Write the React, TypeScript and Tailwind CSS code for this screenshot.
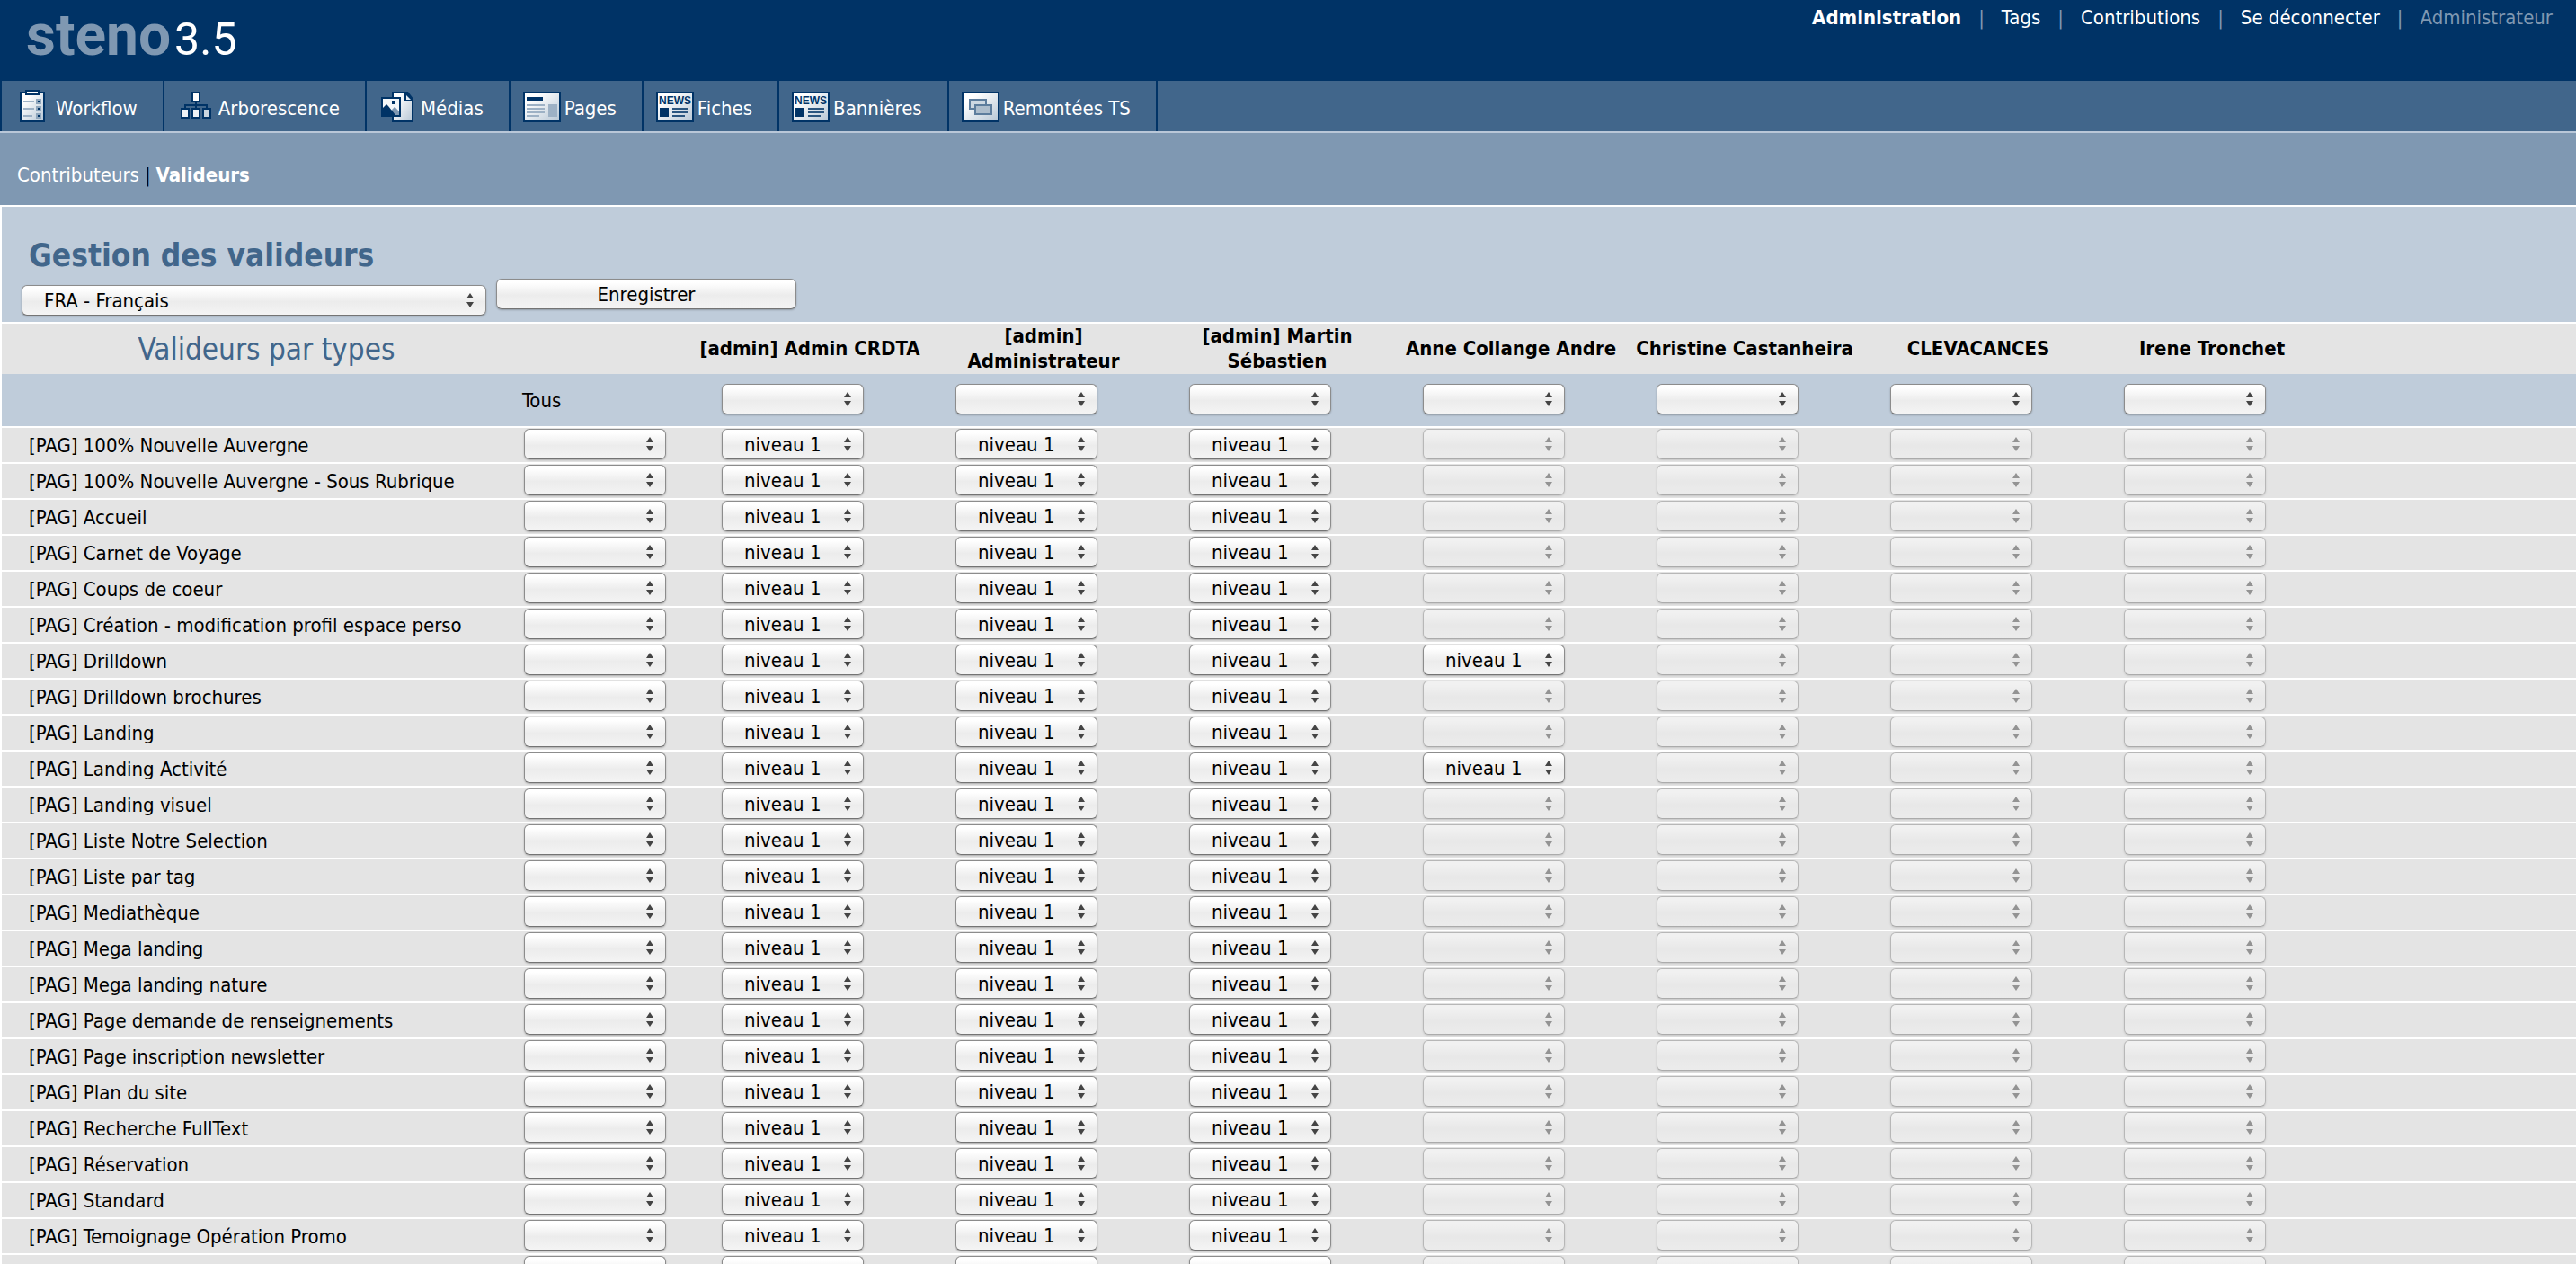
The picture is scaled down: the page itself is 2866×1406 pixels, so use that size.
import type { ReactNode } from 'react';

const NAVY = '#003366';

const PEOPLE = [
  '[admin] Admin CRDTA',
  '[admin] Administrateur',
  '[admin] Martin Sébastien',
  'Anne Collange Andre',
  'Christine Castanheira',
  'CLEVACANCES',
  'Irene Tronchet',
];

const TYPES = [
  '100% Nouvelle Auvergne',
  '100% Nouvelle Auvergne - Sous Rubrique',
  'Accueil',
  'Carnet de Voyage',
  'Coups de coeur',
  'Création - modification profil espace perso',
  'Drilldown',
  'Drilldown brochures',
  'Landing',
  'Landing Activité',
  'Landing visuel',
  'Liste Notre Selection',
  'Liste par tag',
  'Mediathèque',
  'Mega landing',
  'Mega landing nature',
  'Page demande de renseignements',
  'Page inscription newsletter',
  'Plan du site',
  'Recherche FullText',
  'Réservation',
  'Standard',
  'Temoignage Opération Promo',
  '',
];

// Types for which the fourth person also validates at level 1.
const FOURTH_PERSON_TYPES = ['Drilldown', 'Landing Activité'];

function isActive(type: string, person: number) {
  return person < 3 || (person === 3 && FOURTH_PERSON_TYPES.includes(type));
}

function NavIcon({ children }: { children: ReactNode }) {
  return (
    <svg viewBox="0 0 21 18" className="h-9 w-[42px] shrink-0" aria-hidden="true">
      <defs>
        <linearGradient id="paper" x1="0" y1="0" x2="1" y2="1">
          <stop offset="0.2" stopColor="#ffffff" />
          <stop offset="1" stopColor="#b9c8d6" />
        </linearGradient>
      </defs>
      {children}
    </svg>
  );
}

const PAPER = 'url(#paper)';

function WorkflowIcon() {
  return (
    <NavIcon>
      <rect x="3" y="1" width="14" height="17" fill={NAVY} />
      <rect x="4" y="2" width="12" height="15" fill={PAPER} />
      <rect x="6" y="0" width="8" height="3" fill={NAVY} />
      <rect x="7" y="1" width="6" height="1" fill="#fff" />
      {[5, 9, 13].map((y) => (
        <g key={y}>
          <rect x="5" y={y + 1} width={y === 13 ? 5 : 6} height="1" fill="#9db1c5" />
          <rect x="12" y={y} width="3" height="3" fill="#8fa6bc" />
          <rect x="13" y={y + 1} width="1" height="1" fill={NAVY} />
        </g>
      ))}
    </NavIcon>
  );
}

function TreeIcon() {
  return (
    <NavIcon>
      <path d="M8 1h5v6h-2v1h6v2h-1v-1h-5v1h-1v-1h-5v1h-1v-2h6v-1h-2z" fill={NAVY} />
      <rect x="9" y="2" width="3" height="4" fill="#fff" />
      {[2, 8, 14].map((x) => (
        <g key={x}>
          <rect x={x} y="10" width="5" height="6" fill={NAVY} />
          <rect x={x + 1} y="11" width="3" height="4" fill={x === 14 ? '#c9d5e0' : '#eef2f6'} />
        </g>
      ))}
    </NavIcon>
  );
}

function MediaIcon() {
  return (
    <NavIcon>
      <path d="M7 1h9l3 4v13H7z" fill={NAVY} />
      <path d="M8 2h6v4h4v11H8z" fill={PAPER} />
      <path d="M15 3l2.5 2.5H15z" fill="#e6ecf2" />
      <rect x="1" y="4" width="11" height="11" fill={NAVY} />
      <rect x="2" y="5" width="9" height="9" fill="#f4f7f9" />
      <path d="M6 12l2.6-2.6L11 12v2H6z" fill="#7f98b2" />
      <path d="M2 10l2-2 1 1 4 5H2z" fill={NAVY} />
      <rect x="7" y="6" width="2" height="2" fill={NAVY} />
    </NavIcon>
  );
}

function PageFrame() {
  return (
    <>
      <rect x="0" y="1" width="21" height="17" fill={NAVY} />
      <rect x="1" y="2" width="19" height="15" fill={PAPER} />
    </>
  );
}

function PagesIcon() {
  return (
    <NavIcon>
      <PageFrame />
      <rect x="2" y="4" width="9" height="2" fill={NAVY} />
      <path d="M2 8h10v1H2zM2 10h10v1H2zM2 12h10v1H2zM2 14h7v1H2z" fill="#9db1c5" />
      <rect x="14" y="8" width="5" height="7" fill="#9db1c5" />
    </NavIcon>
  );
}

function NewsIcon() {
  return (
    <NavIcon>
      <PageFrame />
      <text x="10.5" y="8" textAnchor="middle" fill={NAVY} className="font-['Liberation_Sans',sans-serif] text-[6px] font-bold">
        NEWS
      </text>
      <rect x="2" y="10" width="5" height="5" fill={NAVY} />
      <path d="M9 10h9v1H9zM9 12h9v1H9zM9 14h7v1H9z" fill="#2a557f" />
    </NavIcon>
  );
}

function LayersIcon() {
  return (
    <NavIcon>
      <PageFrame />
      <rect x="4.5" y="5.5" width="9" height="5" fill="#cdd8e2" stroke="#5d7d9d" />
      <rect x="7.5" y="8.5" width="9" height="5" fill="#adbdcc" stroke="#5d7d9d" />
    </NavIcon>
  );
}

const NAV = [
  { label: 'Workflow', icon: <WorkflowIcon /> },
  { label: 'Arborescence', icon: <TreeIcon /> },
  { label: 'Médias', icon: <MediaIcon /> },
  { label: 'Pages', icon: <PagesIcon /> },
  { label: 'Fiches', icon: <NewsIcon /> },
  { label: 'Bannières', icon: <NewsIcon /> },
  { label: 'Remontées TS', icon: <LayersIcon /> },
];

const CONTROL =
  'h-[34px] w-full appearance-none rounded-md border border-[#8c8c8c] border-b-[#747474] bg-linear-to-b from-white from-10% via-[#ececec] via-55% to-[#f4f4f4] pt-0.5 text-[22px] leading-7 text-black shadow-[0_1px_2px_rgba(0,0,0,0.25)]';

function Picker({ label, value = '', disabled = false }: { label: string; value?: string; disabled?: boolean }) {
  return (
    <div className={disabled ? 'relative opacity-50' : 'relative'}>
      <select aria-label={label} defaultValue={value} disabled={disabled} className={`${CONTROL} block pr-8 pl-6`}>
        {value !== '' && <option value={value}>{value}</option>}
        <option value=""></option>
      </select>
      <svg viewBox="0 0 8 16" className="pointer-events-none absolute top-[9px] right-3.5 h-4 w-2" aria-hidden="true">
        <path d="M4 0L8 6H0zM0 10h8L4 16z" fill="#444" />
      </svg>
    </div>
  );
}

function Separator() {
  return <span className="text-[#7f98b2]">|</span>;
}

export default function App() {
  return (
    <div className="flex h-screen flex-col overflow-hidden bg-white font-['DejaVu_Sans_Condensed','DejaVu_Sans',sans-serif] text-[22px] leading-7 text-black">
      <header className="flex h-[90px] shrink-0 items-start justify-between bg-[#003366] pr-[26px] pl-[29px]">
        <a href="#" className="flex items-baseline gap-1 pt-1 font-['Roboto',sans-serif] leading-[72px]">
          <span className="text-[64px] font-bold text-[#7f98b2]">steno</span>
          <span className="text-[50px] text-white">3.5</span>
        </a>
        <nav className="flex gap-[19px] pt-1.5 text-white">
          <a href="#" className="font-bold">Administration</a>
          <Separator />
          <a href="#">Tags</a>
          <Separator />
          <a href="#">Contributions</a>
          <Separator />
          <a href="#">Se déconnecter</a>
          <Separator />
          <span className="text-[#7f98b2]">Administrateur</span>
        </nav>
      </header>

      <nav className="flex h-[58px] shrink-0 border-b-2 border-[#b9c7d8] bg-[#41668b] text-white">
        {NAV.map((item) => (
          <a
            key={item.label}
            href="#"
            className="flex items-end gap-1 border-l-2 border-[#003366] pr-7 pb-2.5 pl-3.5 leading-[30px] last:border-r-2"
          >
            {item.icon}
            {item.label}
          </a>
        ))}
      </nav>

      <nav className="flex h-20 shrink-0 items-center gap-1.5 bg-[#7f98b2] pt-3.5 pl-[19px] text-white">
        <a href="#">Contributeurs</a>
        <span className="text-black">|</span>
        <a href="#" className="font-bold">Valideurs</a>
      </nav>

      <main className="border-t-2 border-l-2 border-white">
        <section className="bg-[#bfccda] pt-[30px] pb-[7px] pl-[22px]">
          <h1 className="mb-0.5 pl-2 text-[35px] leading-[48px] font-bold text-[#41668b]">Gestion des valideurs</h1>
          <form className="flex h-[41px] gap-[11px]">
            <div className="w-[517px] self-end">
              <Picker label="Langue" value="FRA - Français" />
            </div>
            <div className="w-[334px] self-start">
              <button type="button" className={CONTROL}>Enregistrer</button>
            </div>
          </form>
        </section>

        <table className="w-full table-fixed border-separate border-spacing-0 border-t-2 border-white">
          <colgroup>
            <col className="w-[549px]" />
            <col className="w-[220px]" />
            {PEOPLE.map((person) => (
              <col key={person} className="w-[260px]" />
            ))}
            <col />
          </colgroup>
          <thead>
            <tr className="h-14 bg-[#e4e4e4]">
              <th className="p-0 pt-0.5 pl-10 text-[33px] leading-[48px] font-normal text-[#41668b]">Valideurs par types</th>
              <td></td>
              {PEOPLE.map((person) => (
                <th key={person} scope="col" className="p-0 font-bold">{person}</th>
              ))}
              <td></td>
            </tr>
            <tr className="h-[60px] bg-[#bfccda] [&>*]:border-b-2 [&>*]:border-white">
              <td></td>
              <th scope="row" className="p-0 pt-0.5 pl-[30px] text-left font-normal">Tous</th>
              {PEOPLE.map((person) => (
                <td key={person} className="p-0 pt-[11px] pr-[70px] pl-8 align-top">
                  <Picker label={`Tous - ${person}`} />
                </td>
              ))}
              <td></td>
            </tr>
          </thead>
          <tbody>
            {TYPES.map((type) => (
              <tr key={type} className="h-10 bg-[#e4e4e4] [&>*]:border-b-2 [&>*]:border-white">
                <th scope="row" className="p-0 pt-0.5 pl-[30px] text-left font-normal">{type && `[PAG] ${type}`}</th>
                <td className="p-0 pt-px pr-[30px] pl-8 align-top">
                  <Picker label={`${type} - Tous`} />
                </td>
                {PEOPLE.map((person, index) => (
                  <td key={person} className="p-0 pt-px pr-[70px] pl-8 align-top">
                    <Picker
                      label={`${type} - ${person}`}
                      value={isActive(type, index) ? 'niveau 1' : ''}
                      disabled={!isActive(type, index)}
                    />
                  </td>
                ))}
                <td></td>
              </tr>
            ))}
          </tbody>
        </table>
      </main>
    </div>
  );
}
